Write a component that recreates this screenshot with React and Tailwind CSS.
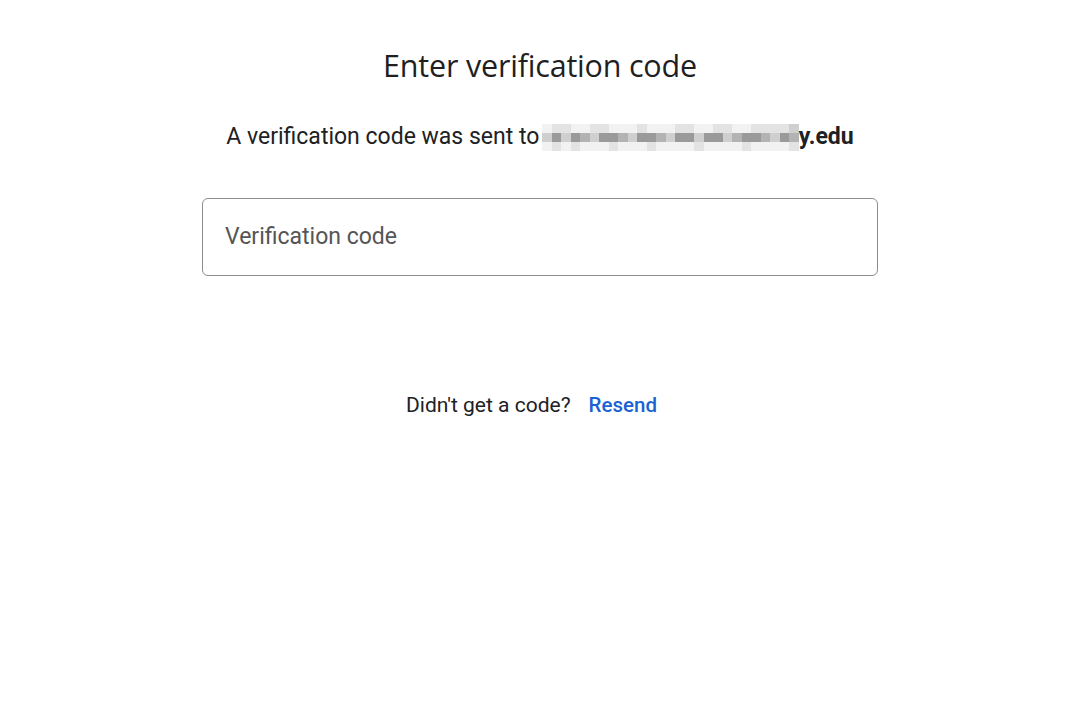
const shades = {
  0: "bg-white",
  1: "bg-[#f2f2f2]",
  2: "bg-[#e3e3e3]",
  3: "bg-[#cfcfcf]",
  4: "bg-[#b3b3b3]",
  5: "bg-[#9a9a9a]",
  6: "bg-[#858585]",
};

// pixelated (blurred) email address
const mosaic = [
  "122112211121112211221122223",
  "353543554355435535534554354",
  "121211121112111121111211112",
];

const Mosaic = () => (
  <span className="inline-flex flex-col align-middle ml-[3px]">
    {mosaic.map((row, i) => (
      <span key={i} className="flex">
        {row.split("").map((c, j) => (
          <span key={j} className={`block w-[9.5px] h-[9px] ${shades[c]}`} />
        ))}
      </span>
    ))}
  </span>
);

export default function App() {
  return (
    <div className="min-h-[703px] bg-white flex flex-col items-center font-['Roboto',sans-serif] text-[#202124]">
      <h1 className="mt-[45px] text-[30.5px] leading-[40px] font-['Open_Sans',sans-serif] text-[#1f1f1f] tracking-[-0.2px]">
        Enter verification code
      </h1>
      <p className="mt-[37px] text-[23px] leading-[30px] flex items-center">
        <span>A verification code was sent to</span>
        <Mosaic />
        <span className="font-bold">y.edu</span>
      </p>
      <div className="mt-[46px] w-[676px] h-[78px] border border-[#8c8c8c] rounded-[6px] flex items-center px-[22px]">
        <input
          type="text"
          placeholder="Verification code"
          className="w-full outline-none text-[23px] text-[#444] placeholder:text-[#555]"
        />
      </div>
      <div className="mt-[115px] mr-[17px] flex items-center gap-[18px] leading-[28px]">
        <span className="text-[21px]">Didn't get a code?</span>
        <button className="text-[20.5px] text-[#1a62d3] font-medium">Resend</button>
      </div>
    </div>
  );
}
